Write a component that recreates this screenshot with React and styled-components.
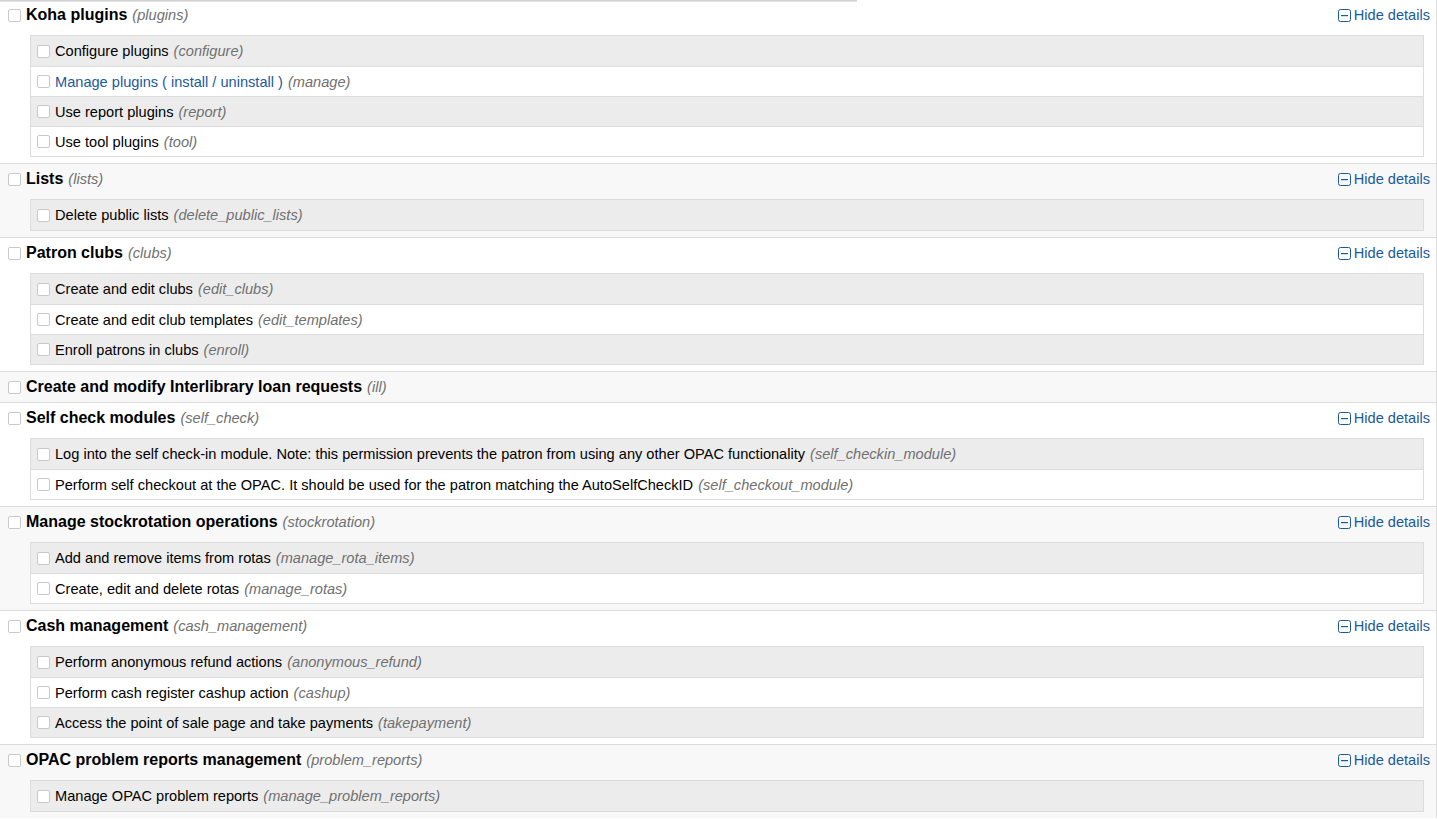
import React from 'react';
import styled, { createGlobalStyle } from 'styled-components';

const GlobalStyle = createGlobalStyle`
body {
  margin: 0;
  background: #fff;
  font-family: "Liberation Sans", Arial, sans-serif;
  font-size: 14.6px;
  color: #000;
}
`

const Page = styled.div`
position: relative;
width: 1436px;
border-right: 1px solid #dcdcdc;
`
const TopShadow = styled.div`
position: absolute;
top: 0;
left: 0;
width: 857px;
height: 2px;
background: linear-gradient(#c8c8c8, #ececec);
`
const Section = styled.div`
background-color: ${props => props.$alt ? '#f8f8f8' : '#fff'};
border-top: ${props => props.$first ? 'none' : '1px solid #dcdcdc'};
padding: 5px 6px ${props => props.$open ? '6px' : '5px'} 8px;
`
const TitleRow = styled.div`
display: flex;
align-items: center;
height: 20px;
`
const Box = styled.span`
display: inline-block;
flex: none;
width: 11px;
height: 11px;
border: 1px solid #c9c9c9;
border-radius: 2px;
background: #fff;
`
const Title = styled.span`
font-size: 16px;
font-weight: bold;
margin-left: 5px;
`
const Code = styled.span`
font-style: italic;
color: #707070;
font-weight: normal;
font-size: 14.6px;
margin-left: 5px;
`
const Toggle = styled.span`
margin-left: auto;
display: flex;
align-items: center;
color: #1a5a9b;
font-size: 14.6px;
gap: 3px;
`
const Perms = styled.div`
margin: 10px 6px 0 22px;
border: 1px solid #dcdcdc;
`
const Perm = styled.div`
display: flex;
align-items: center;
height: 29px;
padding-left: 6px;
background-color: ${props => props.$odd ? '#ececec' : '#fff'};
border-top: ${props => props.$first ? 'none' : '1px solid #dcdcdc'};
&:first-child {
  height: 30px;
}
`
const PermText = styled.span`
margin-left: 5px;
color: ${props => props.$link ? '#1a5a9b' : '#000'};
`

const sections = [
  { title: 'Koha plugins', code: 'plugins', perms: [
    ['Configure plugins', 'configure'],
    ['Manage plugins ( install / uninstall )', 'manage', true],
    ['Use report plugins', 'report'],
    ['Use tool plugins', 'tool'],
  ] },
  { title: 'Lists', code: 'lists', perms: [
    ['Delete public lists', 'delete_public_lists'],
  ] },
  { title: 'Patron clubs', code: 'clubs', perms: [
    ['Create and edit clubs', 'edit_clubs'],
    ['Create and edit club templates', 'edit_templates'],
    ['Enroll patrons in clubs', 'enroll'],
  ] },
  { title: 'Create and modify Interlibrary loan requests', code: 'ill', perms: [] },
  { title: 'Self check modules', code: 'self_check', perms: [
    ['Log into the self check-in module. Note: this permission prevents the patron from using any other OPAC functionality', 'self_checkin_module'],
    ['Perform self checkout at the OPAC. It should be used for the patron matching the AutoSelfCheckID', 'self_checkout_module'],
  ] },
  { title: 'Manage stockrotation operations', code: 'stockrotation', perms: [
    ['Add and remove items from rotas', 'manage_rota_items'],
    ['Create, edit and delete rotas', 'manage_rotas'],
  ] },
  { title: 'Cash management', code: 'cash_management', perms: [
    ['Perform anonymous refund actions', 'anonymous_refund'],
    ['Perform cash register cashup action', 'cashup'],
    ['Access the point of sale page and take payments', 'takepayment'],
  ] },
  { title: 'OPAC problem reports management', code: 'problem_reports', perms: [
    ['Manage OPAC problem reports', 'manage_problem_reports'],
  ] },
];

const MinusIcon = () => (
  <svg width="13" height="13" viewBox="0 0 13 13">
    <rect x="0.5" y="0.5" width="12" height="12" rx="2" fill="none" stroke="#1a5a9b" />
    <rect x="3" y="6" width="7" height="1.2" fill="#1a5a9b" />
  </svg>
);

function App() {
  return (
    <Page>
      <GlobalStyle />
      {sections.map((s, i) => (
        <Section key={s.code} $first={i === 0} $alt={i % 2 === 1} $open={s.perms.length > 0}>
          <TitleRow>
            <Box />
            <Title>{s.title}</Title>
            <Code>({s.code})</Code>
            {s.perms.length > 0 && (
              <Toggle><MinusIcon />Hide details</Toggle>
            )}
          </TitleRow>
          {s.perms.length > 0 && (
            <Perms>
              {s.perms.map(([label, code, link], j) => (
                <Perm key={code} $odd={j % 2 === 0} $first={j === 0}>
                  <Box />
                  <PermText $link={link}>{label}</PermText>
                  <Code>({code})</Code>
                </Perm>
              ))}
            </Perms>
          )}
        </Section>
      ))}
      <TopShadow />
    </Page>
  );
}

export default App;
